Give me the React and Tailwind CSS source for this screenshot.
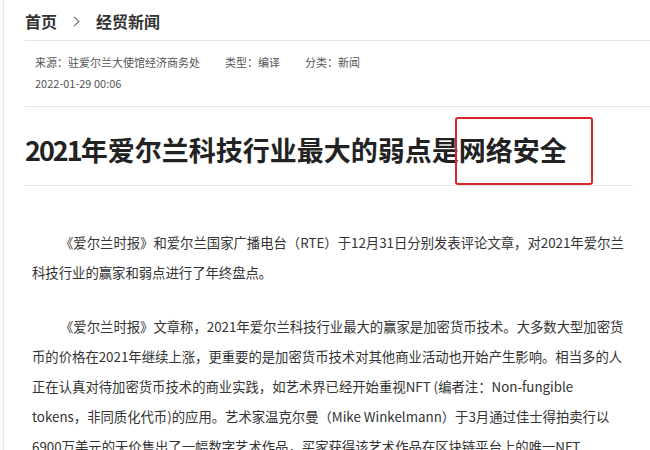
const FONT = { fontFamily: '"Noto Sans CJK SC", "Noto Sans", sans-serif' }

const para1 = [
  '《爱尔兰时报》和爱尔兰国家广播电台（RTE）于12月31日分别发表评论文章，对2021年爱尔兰',
  '科技行业的赢家和弱点进行了年终盘点。',
]

const para2 = [
  '《爱尔兰时报》文章称，2021年爱尔兰科技行业最大的赢家是加密货币技术。大多数大型加密货',
  '币的价格在2021年继续上涨，更重要的是加密货币技术对其他商业活动也开始产生影响。相当多的人',
  '正在认真对待加密货币技术的商业实践，如艺术界已经开始重视NFT (编者注：Non-fungible',
  'tokens，非同质化代币)的应用。艺术家温克尔曼（Mike Winkelmann）于3月通过佳士得拍卖行以',
  '6900万美元的天价售出了一幅数字艺术作品，买家获得该艺术作品在区块链平台上的唯一NFT',
]

function Para({ lines, className = '' }) {
  return (
    <div className={className}>
      {lines.map((t, i) => (
        <div key={i} className={`whitespace-nowrap leading-[30px] ${i === 0 ? 'pl-[28px]' : ''}`}>{t}</div>
      ))}
    </div>
  )
}

export default function App() {
  return (
    <div className="relative w-[650px] h-[450px] overflow-hidden bg-white" style={FONT}>
      <div className="ml-[3px] h-full border-l border-[#e8e8e8] pl-[21px]">

        {/* Breadcrumb */}
        <div className="h-[41px] pt-[2px] flex items-center border-b border-[#e6e6e6] text-[16px] font-bold text-[#333]">
          <span>首页</span>
          <svg className="ml-[16px] mr-[16px]" width="7" height="11" viewBox="0 0 7 11" fill="none">
            <polyline points="1,1 6,5.5 1,10" stroke="#777" strokeWidth="1.1" />
          </svg>
          <span>经贸新闻</span>
        </div>

        {/* Meta */}
        <div className="pl-[10px] pt-[11px] pb-[12px] border-b border-[#e6e6e6] text-[11px] text-[#555] leading-[21px]">
          <div className="flex gap-[25px]">
            <span>来源：驻爱尔兰大使馆经济商务处</span>
            <span>类型：编译</span>
            <span>分类：新闻</span>
          </div>
          <div>2022-01-29 00:06</div>
        </div>

        {/* Title */}
        <div className="mr-[17px] pt-[23px] pb-[15px] border-b border-[#e6e6e6]">
          <h1 className="text-[27px] leading-[40px] font-bold text-[#222] whitespace-nowrap">
            <span className="tracking-[-2px]">2021</span>年爱尔兰科技行业最大的弱点是网络安全
          </h1>
        </div>

        {/* Body */}
        <div className="pl-[7px] pt-[42px] text-[13.35px] text-[#333]">
          <Para lines={para1} />
          <Para lines={para2} className="mt-[24px]" />
        </div>
      </div>

      {/* red highlight box */}
      <div className="absolute left-[455px] top-[117px] w-[138px] h-[68px] border-2 border-[#d7262b] rounded-[3px]" />
    </div>
  )
}
